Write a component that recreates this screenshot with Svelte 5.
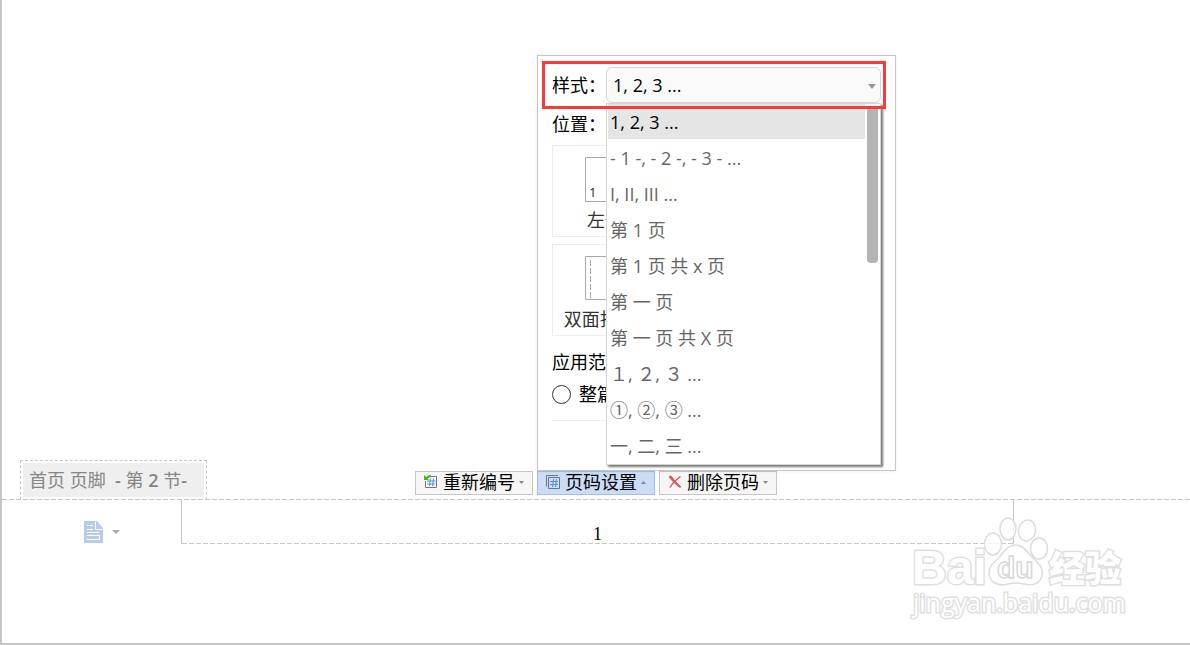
<script>
  const styles = [
    '1, 2, 3 ...',
    '- 1 -, - 2 -, - 3 - ...',
    'I, II, III ...',
    '第 1 页',
    '第 1 页 共 x 页',
    '第 一 页',
    '第 一 页 共 X 页',
    '１, ２, ３ ...',
    '①, ②, ③ ...',
    '一, 二, 三 ...'
  ];
  let selected = $state(styles[0]);
</script>

<main class="page">
  <div class="sheet"></div>

  <div class="bar">
    <div class="tag"><span>{'首页 页脚  '}<b>-</b> 第 <b>2</b> 节<b>-</b></span></div>

    <div class="tools">
      <button class="tool" type="button">
        <svg width="16" height="16" viewBox="0 0 16 16" fill="none">
          <path d="M8 2.5H13.5V13.5H2.5V7" stroke="#777" />
          <path d="M7.500 4.500L6.500 12M10.500 4.500L9.500 12M4 7H12.5M4 10H12" stroke="#5b8de8" />
          <path d="M1 1V6H6L4.5 4.5Q6 3 8 3V1Q5 1 3 3Z" fill="#45b51c" />
        </svg>
        <span>重新编号</span>
        <svg class="caret" width="5" height="3" viewBox="0 0 5 3"><path d="M0 0H5L2.5 3Z" fill="#888" /></svg>
      </button>

      <div class="anchor">
        <button class="tool active" type="button" aria-expanded="true">
          <svg width="16" height="16" viewBox="0 0 16 16" fill="none">
            <path d="M1.5 12.5V1.5H13M3.5 3.5H14.5V14.5H3.5Z" stroke="#6f7680" />
            <path d="M8.500 5L7.500 13M11.500 5L10.500 13M5 7.5H13M5 10.5H13" stroke="#5b8de8" />
          </svg>
          <span>页码设置</span>
          <svg class="caret" width="5" height="3" viewBox="0 0 5 3"><path d="M0 3H5L2.5 0Z" fill="#7b8696" /></svg>
        </button>

        <section class="popup">
          <div class="row style-row">
            <label for="number-style">样式：</label>
            <div class="combo">
              <select id="number-style" bind:value={selected}>
                {#each styles as s}<option value={s}>{s}</option>{/each}
              </select>
              <svg class="combo-caret" width="8" height="5" viewBox="0 0 8 5"><path d="M0 0H8L4 5Z" fill="#999" /></svg>
              <div class="list">
                <ul role="listbox" aria-label="样式">
                  {#each styles as s}
                    <li role="option" aria-selected={s === selected}>{s}</li>
                  {/each}
                </ul>
                <div class="track"><div class="thumb"></div></div>
              </div>
            </div>
          </div>
          <div class="row"><span>位置：</span></div>
          <div class="cards">
            <button class="card" type="button">
              <svg width="40" height="46" viewBox="0 0 40 46">
                <path d="M.5 .5H39.5V44.5H.5Z" fill="#fff" stroke="#aaa" />
                <text x="4" y="40" font-size="13" fill="#222">1</text>
              </svg>
              <span>左侧</span>
            </button>
            <button class="card" type="button">
              <svg width="40" height="46" viewBox="0 0 40 46">
                <path d="M.5 .5H39.5V43.5H.5Z" fill="#fff" stroke="#aaa" />
                <path d="M5.5 4V42" stroke="#aaa" stroke-dasharray="6 2" />
              </svg>
              <span>双面打印1</span>
            </button>
          </div>
          <div class="scope">
            <span>应用范围：</span>
            <label><input type="radio" name="scope" />整篇文档</label>
          </div>
        </section>
      </div>

      <button class="tool" type="button">
        <svg width="16" height="16" viewBox="0 0 16 16" fill="none">
          <path d="M2 3L4 2Q8 8 14 13L12 13Q7 9 2 3Z" fill="#d9595b" stroke="#d9595b" />
          <path d="M13.5 2.500Q6 8 3 13.500" stroke="#d9595b" stroke-width="1.500" />
        </svg>
        <span>删除页码</span>
        <svg class="caret" width="5" height="3" viewBox="0 0 5 3"><path d="M0 0H5L2.5 3Z" fill="#888" /></svg>
      </button>
    </div>
  </div>

  <footer>
    <button class="layout" type="button" aria-label="页脚">
      <svg width="19" height="22" viewBox="0 0 19 22">
        <path d="M0 0H13L19 7V22H0Z" fill="#b7ccea" />
        <path d="M11.5 1V8.5H18M3 4.5H9M3 8.5H9M3 11.5H15M3 14.5H16M3 18.5H16M15.5 14V19" fill="none" stroke="#fff" />
      </svg>
      <svg width="8" height="4" viewBox="0 0 8 4"><path d="M0 0H8L4 4Z" fill="#aaa" /></svg>
    </button>
    <div class="frame">1</div>
  </footer>

  <svg class="mark" width="218" height="108" viewBox="0 0 218 108">
    <g fill="#fff" fill-opacity="0.8" stroke="#dcdcdc" stroke-width="1.5">
      <ellipse cx="83" cy="29" rx="8.500" ry="11" />
      <ellipse cx="98" cy="14" rx="8" ry="11" />
      <ellipse cx="117" cy="15.500" rx="8.500" ry="10.500" transform="rotate(12 117 15.5)" />
      <ellipse cx="129" cy="33.500" rx="8.500" ry="10.500" />
      <path d="M105 30C114 30 117 37 123 43C129 49 134 53 132 61C130 69 122 71 114 69Q106 67 98 69C88 72 79 67 79 58C79 49 87 46 92 39C96 34 99 30 105 30Z" />
    </g>
    <g class="outlined" fill="#fff" stroke="#dfdfdf" stroke-width="3">
      <text x="2" y="69" font-size="48" font-weight="700" class="latin">Bai</text>
      <text x="139" y="67" font-size="36" font-weight="900" class="cjk">经验</text>
    </g>
    <text x="3" y="97" font-size="25" class="url outlined" fill="#fff" stroke="#e0e0e0" stroke-width="3">jingyan.baidu.com</text>
    <text x="87" y="63" font-size="30" font-weight="700" class="latin" fill="#fff" stroke="#d8d8d8" stroke-width="1.5">du</text>
  </svg>
</main>

<style>
  :global(body) {
    margin: 0;
    background: #fff;
  }
  .page {
    position: relative;
    box-sizing: border-box;
    min-height: 100vh;
    display: flex;
    flex-direction: column;
    border-left: 2px solid #c6c6c6;
    border-bottom: 2px solid #c6c6c6;
    font: 18px/24px "Open Sans", "Noto Sans CJK SC", sans-serif;
    color: #000;
  }
  button,
  select {
    font: inherit;
    color: inherit;
  }
  .sheet {
    flex: 1;
  }
  .bar {
    display: grid;
    grid-template-columns: 1fr auto 1fr;
    align-items: end;
    background: repeating-linear-gradient(90deg, #c6c6c6 0 5px, transparent 5px 7px) bottom / 100% 1px no-repeat;
  }
  .tag {
    justify-self: start;
    box-sizing: border-box;
    width: 187px;
    margin-left: 18px;
    padding: 2px 2px 3px;
    border: 1px dashed #c6c6c6;
    border-bottom: 0;
  }
  .tag span {
    display: block;
    padding: 0 6px;
    line-height: 34px;
    background: #efefef;
    color: #858585;
    white-space: pre;
  }
  .tag b {
    font-weight: 600;
  }
  .tools {
    display: flex;
    gap: 4px;
    padding-bottom: 5px;
  }
  .anchor {
    position: relative;
  }
  .tool {
    box-sizing: border-box;
    display: flex;
    align-items: center;
    width: 118px;
    height: 24px;
    padding: 0 0 2px 7px;
    border: 1px solid #c6c6c6;
    background: #f6f6f6;
    line-height: 22px;
    white-space: nowrap;
  }
  .tool span {
    margin: 0 4px;
  }
  .tool.active {
    background: #cbddf6;
    border-color: #a2bfe6;
  }
  .popup {
    position: absolute;
    left: 0;
    bottom: 100%;
    box-sizing: border-box;
    width: 359px;
    padding: 11px 14px 49px;
    border: 1px solid #c6c6c6;
    background: #fff;
    box-shadow: 0 0 4px #0001;
  }
  .row {
    position: relative;
    display: flex;
    align-items: center;
    height: 36px;
    margin-bottom: 3px;
  }
  .row > :first-child {
    flex: 0 0 54px;
  }
  .style-row::after {
    content: "";
    position: absolute;
    z-index: 3;
    inset: -6px -5px -6px -10px;
    border: 3px solid #f93a3a;
    pointer-events: none;
  }
  .combo {
    position: relative;
    flex: 0 0 275px;
  }
  select {
    appearance: none;
    display: block;
    box-sizing: border-box;
    width: 100%;
    height: 36px;
    padding: 0 24px 0 6px;
    border: 1px solid #d6d6d6;
    border-radius: 6px;
    background: #fafafa;
  }
  .combo-caret {
    position: absolute;
    right: 5px;
    top: 17px;
  }
  .list {
    position: absolute;
    z-index: 2;
    top: 100%;
    left: 0;
    right: 0;
    display: flex;
    gap: 2px;
    padding: 0 2px 0 1px;
    border: 1px solid #d6d6d6;
    background: #fff;
    box-shadow: 2px 2px 2px #777;
    box-sizing: border-box;
  }
  ul {
    flex: 1;
    margin: 0;
    padding: 0;
    list-style: none;
  }
  li {
    box-sizing: border-box;
    height: 36px;
    padding-left: 2px;
    line-height: 36px;
    color: #666;
    white-space: pre;
  }
  li[aria-selected="true"] {
    background: #e5e5e5 padding-box;
    border-bottom: 1px solid transparent;
    color: #000;
  }
  .track {
    width: 11px;
    padding-top: 2px;
  }
  .thumb {
    height: 157px;
    border-radius: 4px;
    background: #b4b4b6;
  }
  .cards {
    display: grid;
    grid-template-columns: 106px;
    gap: 7px;
  }
  .card {
    box-sizing: border-box;
    display: flex;
    flex-direction: column;
    align-items: center;
    gap: 5px;
    height: 92px;
    padding: 11px 0 0;
    border: 1px solid #ececec;
    background: #fff;
    color: #333;
  }
  .scope {
    display: flex;
    flex-direction: column;
    gap: 8px;
    margin-top: 14px;
    padding-bottom: 14px;
    border-bottom: 1px solid #ececec;
  }
  .scope label {
    display: flex;
    align-items: center;
    gap: 8px;
  }
  input {
    appearance: none;
    box-sizing: border-box;
    width: 19px;
    height: 19px;
    margin: 0;
    border: 1px solid #333;
    border-radius: 50%;
  }
  footer {
    display: grid;
    grid-template-columns: 179px 1fr 176px;
    align-items: start;
    min-height: 143px;
  }
  .layout {
    display: flex;
    align-items: center;
    gap: 9px;
    margin: 21px 0 0 82px;
    padding: 0;
    border: 0;
    background: none;
  }
  .frame {
    box-sizing: border-box;
    height: 44px;
    padding-top: 22px;
    border: solid #c6c6c6;
    border-width: 0 1px;
    background: repeating-linear-gradient(90deg, #c6c6c6 0 5px, transparent 5px 7px) bottom / 100% 1px no-repeat;
    font-family: "Liberation Serif", serif;
    font-size: 18px;
    text-align: center;
  }
  .mark {
    position: absolute;
    right: 62px;
    bottom: 20px;
  }
  .outlined {
    paint-order: stroke;
  }
  .latin {
    font-family: "Liberation Sans", sans-serif;
  }
  .cjk {
    font-family: "Noto Sans CJK SC", sans-serif;
  }
  .url {
    font-family: "Open Sans", sans-serif;
  }
</style>
